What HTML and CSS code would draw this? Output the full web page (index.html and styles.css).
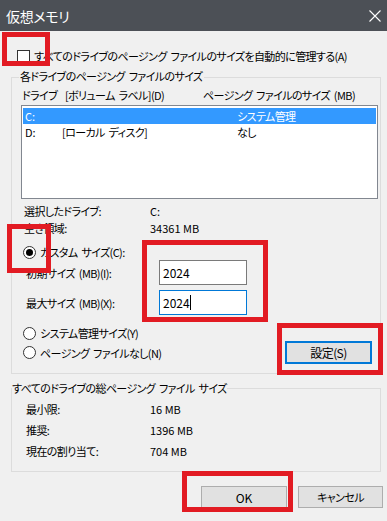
FILE: index.html
```html
<!DOCTYPE html>
<html lang="ja">
<head>
    <meta charset="UTF-8">
    <meta name="viewport" content="width=device-width, initial-scale=1.0">
    <title>仮想メモリ</title>
    <link rel="stylesheet" href="styles.css">
</head>
<body>
    <div class="dialog">
        <div class="titlebar">
            <span class="title">仮想メモリ</span>
            <svg class="close" width="12" height="12" viewBox="0 0 12 12" fill="none" stroke="#ffffff" stroke-width="1.1">
                <path d="M0.5 0.5l11 11M11.5 0.5l-11 11"/>
            </svg>
        </div>

        <div class="auto-row">
            <span class="checkbox"></span>
            <span>すべてのドライブのページング ファイルのサイズを自動的に管理する(A)</span>
        </div>

        <div class="group group-drives">
            <div class="group-title">各ドライブのページング ファイルのサイズ</div>
            <div class="list-head">
                <span>ドライブ&nbsp;&nbsp;[ボリューム ラベル](D)</span>
                <span>ページング ファイルのサイズ (MB)</span>
            </div>
            <div class="listbox">
                <div class="list-row selected">
                    <span class="num">C:</span><span></span><span>システム管理</span>
                </div>
                <div class="list-row">
                    <span class="num">D:</span><span>[ローカル ディスク]</span><span>なし</span>
                </div>
            </div>

            <div class="info-row"><span>選択したドライブ:</span><span class="num">C:</span></div>
            <div class="info-row"><span>空き領域:</span><span class="num">34361 MB</span></div>

            <div class="radio-row radio-custom">
                <span class="radio checked"></span>
                <span>カスタム サイズ(C):</span>
            </div>
            <div class="size-grid">
                <span>初期サイズ (MB)(I):</span>
                <div class="textbox num">2024</div>
                <span>最大サイズ (MB)(X):</span>
                <div class="textbox focused num">2024<span class="caret"></span></div>
            </div>

            <div class="radio-row radio-system">
                <span class="radio"></span>
                <span>システム管理サイズ(Y)</span>
            </div>
            <div class="last-row">
                <div class="radio-row">
                    <span class="radio"></span>
                    <span>ページング ファイルなし(N)</span>
                </div>
                <button class="btn btn-default">設定(S)</button>
            </div>
        </div>

        <div class="group group-total">
            <div class="group-title">すべてのドライブの総ページング ファイル サイズ</div>
            <div class="total-rows">
                <div class="total-row"><span>最小限:</span><span class="num">16 MB</span></div>
                <div class="total-row"><span>推奨:</span><span class="num">1396 MB</span></div>
                <div class="total-row"><span>現在の割り当て:</span><span class="num">704 MB</span></div>
            </div>
        </div>

        <div class="actions">
            <button class="btn btn-ok num">OK</button>
            <button class="btn btn-cancel">キャンセル</button>
        </div>

        <!-- annotation boxes drawn over the dialog -->
        <div class="mark mark-auto"></div>
        <div class="mark mark-custom"></div>
        <div class="mark mark-inputs"></div>
        <div class="mark mark-set"></div>
        <div class="mark mark-ok"></div>
    </div>
</body>
</html>
```

FILE: styles.css
```css
:root {
    --bg: #f0f0f0;
    --title-bg: #4c5056;
    --text: #000000;
    --group-line: #dcdcdc;
    --list-border: #828790;
    --select: #3399ff;
    --focus: #0078d7;
    --btn-bg: #e1e1e1;
    --btn-border: #adadad;
    --mark: #e21b23;
}

* {
    margin: 0;
    padding: 0;
    box-sizing: border-box;
}

body {
    background-color: var(--bg);
    color: var(--text);
    font-family: "Noto Sans CJK JP", "Noto Sans", sans-serif;
    font-feature-settings: "palt";
    font-size: 11px;
    letter-spacing: -0.6px;
    word-spacing: 2px;
    width: 387px;
    height: 521px;
    overflow: hidden;
}

.num {
    letter-spacing: 0;
    word-spacing: 0;
}

.dialog {
    position: relative;
    width: 387px;
    height: 521px;
}

.titlebar {
    height: 31px;
    background-color: var(--title-bg);
    display: flex;
    align-items: center;
    justify-content: space-between;
    padding: 0 5px 0 6px;
}

.title {
    color: #ffffff;
    font-size: 14px;
    line-height: 16px;
    letter-spacing: -0.3px;
}

.close {
    margin-right: 1px;
}

.auto-row {
    display: flex;
    align-items: center;
    gap: 4px;
    height: 16px;
    margin-top: 17px;
    padding-left: 17px;
    line-height: 16px;
    white-space: nowrap;
}

.checkbox {
    flex: none;
    width: 13px;
    height: 13px;
    background: #ffffff;
    border: 1px solid #333333;
}

.group {
    margin: 0 6px 0 11px;
    border: 1px solid var(--group-line);
}

.group-title {
    width: fit-content;
    margin-top: -10px;
    line-height: 16px;
    background-color: var(--bg);
    white-space: nowrap;
}

.group-drives {
    margin-top: 13px;
    padding-bottom: 9px;
}

.group-drives .group-title {
    margin-left: 7px;
    padding: 0 1px;
}

.list-head {
    display: grid;
    grid-template-columns: 181px auto;
    height: 16px;
    line-height: 16px;
    margin-top: 3px;
    padding-left: 10px;
    white-space: nowrap;
}

.listbox {
    height: 94px;
    margin: 2px 2px 0 9px;
    border: 1px solid var(--list-border);
    background: #ffffff;
    padding: 2px 1px;
}

.list-row {
    display: grid;
    grid-template-columns: 37px 175px auto;
    height: 16px;
    line-height: 16px;
    padding-left: 2px;
}

.list-row.selected {
    background-color: var(--select);
    color: #ffffff;
}

.info-row {
    display: grid;
    grid-template-columns: 126px auto;
    height: 17px;
    line-height: 17px;
    padding-left: 12px;
}

.listbox + .info-row {
    margin-top: 4px;
}

.radio-row {
    display: flex;
    align-items: center;
    gap: 4px;
    height: 16px;
    line-height: 16px;
    padding-left: 11px;
}

.radio {
    flex: none;
    width: 13px;
    height: 13px;
    border: 1px solid #333333;
    border-radius: 50%;
    background: #ffffff;
    display: flex;
    align-items: center;
    justify-content: center;
}

.radio.checked::after {
    content: "";
    width: 7px;
    height: 7px;
    border-radius: 50%;
    background: #000000;
}

.radio-custom {
    margin-top: 7px;
}

.size-grid {
    display: grid;
    grid-template-columns: 133px 88px;
    grid-auto-rows: 25px;
    row-gap: 5px;
    align-items: center;
    padding-left: 14px;
}

.textbox {
    height: 25px;
    border: 1px solid #7a7a7a;
    background: #ffffff;
    padding-left: 3px;
    font-size: 12px;
    line-height: 23px;
    display: flex;
    align-items: center;
}

.textbox.focused {
    border-color: var(--focus);
}

.caret {
    width: 1px;
    height: 15px;
    background: #000000;
}

.radio-system {
    margin-top: 10px;
}

.last-row {
    display: flex;
    align-items: center;
    justify-content: space-between;
    height: 23px;
    padding-right: 8px;
}

.btn {
    font-family: inherit;
    font-feature-settings: "palt";
    font-size: 11px;
    letter-spacing: -0.6px;
    color: var(--text);
    background-color: var(--btn-bg);
    border: 1px solid var(--btn-border);
    height: 22px;
}

.btn.num {
    letter-spacing: 0;
}

.btn-default {
    width: 87px;
    height: 23px;
    font-size: 12px;
    border: 2px solid var(--focus);
}

.group-total {
    margin-top: 14px;
    padding-bottom: 9px;
}

.group-total .group-title {
    margin-top: -9px;
}

.total-rows {
    margin-top: 3px;
}

.total-row {
    display: grid;
    grid-template-columns: 124px auto;
    height: 21px;
    line-height: 21px;
    padding-left: 14px;
}

.actions {
    display: flex;
    justify-content: flex-end;
    gap: 11px;
    margin-top: 14px;
    padding-right: 4px;
}

.btn-ok {
    width: 86px;
    font-size: 12px;
}

.btn-cancel {
    width: 85px;
}

.mark {
    position: absolute;
    border: 5px solid var(--mark);
}

.mark-auto { left: 2px; top: 32px; width: 48px; height: 34px; }
.mark-custom { left: 7px; top: 224px; width: 44px; height: 49px; }
.mark-inputs { left: 142px; top: 240px; width: 126px; height: 82px; }
.mark-set { left: 277px; top: 323px; width: 106px; height: 52px; }
.mark-ok { left: 182px; top: 471px; width: 111px; height: 41px; }
```
